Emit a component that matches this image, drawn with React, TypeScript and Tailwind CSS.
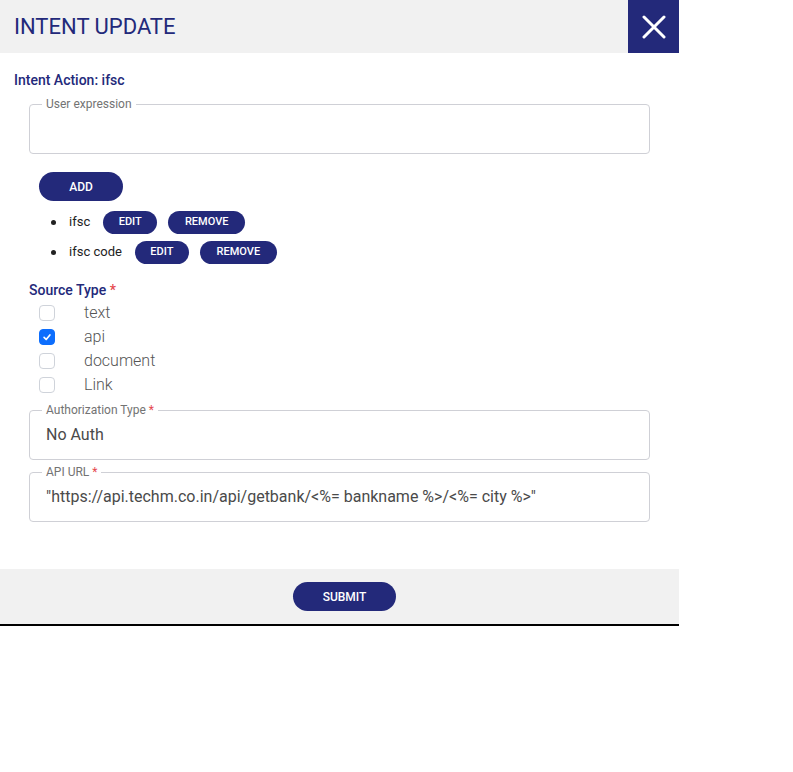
import React, { useState } from "react";

const NAVY = "bg-[#23297a]";

const Field = ({
  label,
  required,
  value,
}: {
  label: string;
  required?: boolean;
  value?: string;
}) => (
  <fieldset className="ml-[29px] w-[621px] h-[56px] border border-[#cfd0d6] rounded-[4px] px-[16px]">
    <legend className="ml-[-4px] px-[4px] text-[12px] leading-[13px] text-[#737373]">
      {label}
      {required && <span className="text-[#e5484d]"> *</span>}
    </legend>
    {value !== undefined && (
      <div className="mt-[6px] text-[16px] leading-6 text-[#4a4a4a]">{value}</div>
    )}
  </fieldset>
);

const PillButton = ({
  children,
  className,
}: {
  children: React.ReactNode;
  className: string;
}) => (
  <button
    className={`${NAVY} rounded-full text-white text-[11px] font-medium flex items-center justify-center ${className}`}
  >
    {children}
  </button>
);

const Expression = ({ text }: { text: string }) => (
  <li className="flex items-center h-[23px]">
    <span className="w-[5px] h-[5px] rounded-full bg-[#222] ml-[51px]" />
    <span className="ml-[13px] text-[13px] text-[#222] -mt-[2px]">{text}</span>
    <PillButton className="ml-[13px] w-[54px] h-[23px]">EDIT</PillButton>
    <PillButton className="ml-[11px] w-[77px] h-[23px]">REMOVE</PillButton>
  </li>
);

export default function App() {
  const [sources, setSources] = useState<Record<string, boolean>>({
    text: false,
    api: true,
    document: false,
    Link: false,
  });

  return (
    <div className="w-[793px] h-[772px] bg-white" style={{ fontFamily: "Roboto, 'Liberation Sans', sans-serif" }}>
      <div className="w-[679px] border-b-2 border-black">
        <div className="h-[53px] bg-[#f1f1f1] flex items-center justify-between">
          <h1 className="ml-[14px] text-[22px] text-[#23297a]">INTENT UPDATE</h1>
          <button className={`${NAVY} w-[51px] h-[53px] flex items-center justify-center`}>
            <svg width="24" height="24" viewBox="0 0 24 24" fill="none" stroke="white" strokeWidth="3" strokeLinecap="round">
              <path d="M2 2L22 22M22 2L2 22" />
            </svg>
          </button>
        </div>

        <div className="pt-[19px] pb-[47px]">
          <div className="ml-[14px] text-[14px] leading-4 font-medium text-[#23297a]">
            Intent Action: ifsc
          </div>
          <div className="mt-[10px]">
            <Field label="User expression" />
          </div>
          <PillButton className="ml-[39px] mt-[18px] w-[84px] h-[29px] text-[12px]">ADD</PillButton>
          <ul className="mt-[10px] flex flex-col gap-[7px]">
            <Expression text="ifsc" />
            <Expression text="ifsc code" />
          </ul>

          <div className="ml-[29px] mt-[18px] text-[14px] leading-4 font-medium text-[#23297a]">
            Source Type <span className="text-[#e5484d]">*</span>
          </div>
          <div className="mt-[3px] flex flex-col">
            {Object.keys(sources).map((k) => (
              <label key={k} className="flex items-center h-[24px]">
                <span
                  onClick={() => setSources((s) => ({ ...s, [k]: !s[k] }))}
                  className={`ml-[39px] w-[16px] h-[16px] rounded-[4px] border flex items-center justify-center ${
                    sources[k] ? "bg-[#0d6efd] border-[#0d6efd]" : "bg-white border-[#cfd3da]"
                  }`}
                >
                  {sources[k] && (
                    <svg width="10" height="10" viewBox="0 0 12 12" fill="none" stroke="white" strokeWidth="2" strokeLinecap="round" strokeLinejoin="round">
                      <path d="M2.5 6.5L5 9L9.5 3.5" />
                    </svg>
                  )}
                </span>
                <span className="ml-[29px] text-[16px] font-light text-[#555]">{k}</span>
              </label>
            ))}
          </div>

          <div className="mt-[7px]">
            <Field label="Authorization Type" required value="No Auth" />
          </div>
          <div className="mt-[6px]">
            <Field
              label="API URL"
              required
              value={'"https://api.techm.co.in/api/getbank/<%= bankname %>/<%= city %>"'}
            />
          </div>
        </div>

        <div className="h-[55px] bg-[#f1f1f1] flex items-center justify-center">
          <PillButton className="ml-[10px] w-[103px] h-[29px] text-[12px]">SUBMIT</PillButton>
        </div>
      </div>
    </div>
  );
}
